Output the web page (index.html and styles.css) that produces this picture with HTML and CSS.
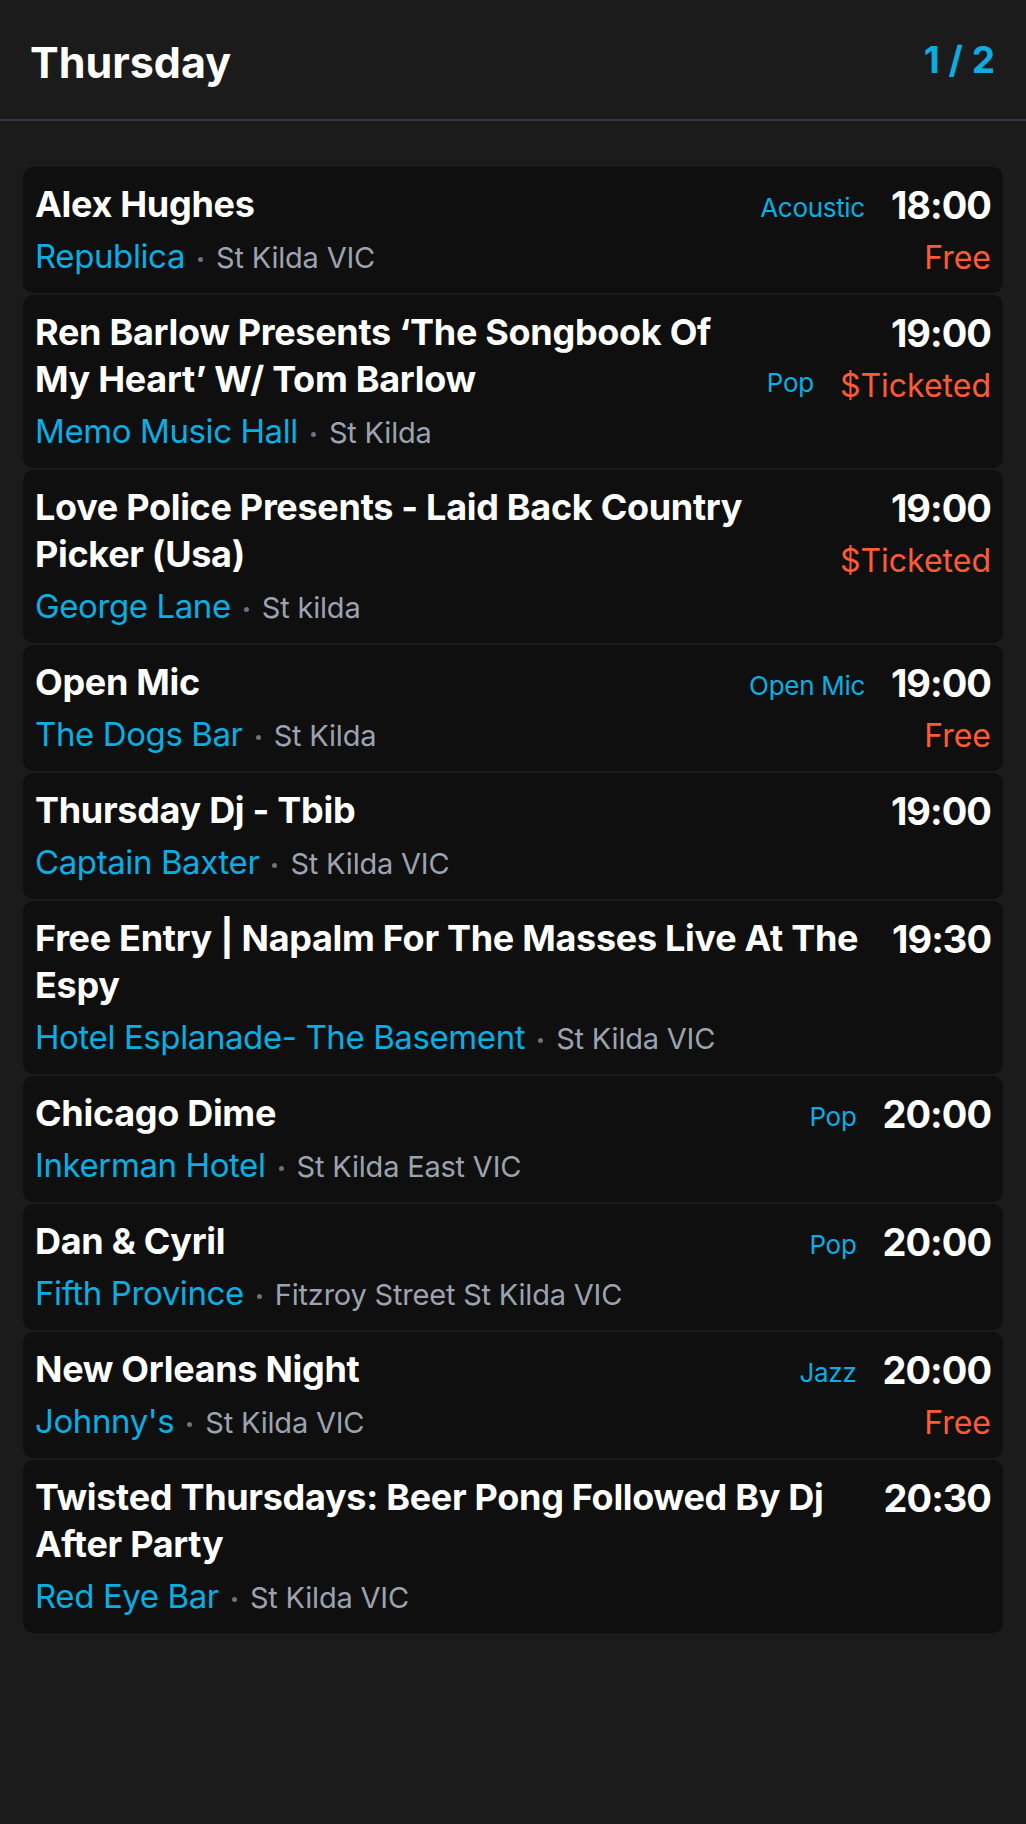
FILE: index.html
```html
<!DOCTYPE html>
<html lang="en">
<head>
<meta charset="utf-8">
<title>Thursday</title>
<link rel="stylesheet" href="styles.css">
</head>
<body>
<div class="screen">
  <header class="top">
    <h1 class="day">Thursday</h1>
    <div class="pager">1 / 2</div>
  </header>
  <main class="list">
    <article class="card">
      <div class="main">
        <div class="headline"><h2 class="title">Alex Hughes</h2><span class="genre">Acoustic</span></div>
        <div class="venue"><span class="vname">Republica</span><span class="dot"></span><span class="loc">St Kilda VIC</span></div>
      </div>
      <div class="side"><div class="time">18:00</div><div class="price">Free</div></div>
    </article>
    <article class="card">
      <div class="main">
        <div class="headline"><h2 class="title">Ren Barlow Presents ‘The Songbook Of My Heart’ W/ Tom Barlow</h2><span class="genre">Pop</span></div>
        <div class="venue"><span class="vname">Memo Music Hall</span><span class="dot"></span><span class="loc">St Kilda</span></div>
      </div>
      <div class="side"><div class="time">19:00</div><div class="price">$Ticketed</div></div>
    </article>
    <article class="card">
      <div class="main">
        <div class="headline"><h2 class="title">Love Police Presents - Laid Back Country Picker (Usa)</h2></div>
        <div class="venue"><span class="vname">George Lane</span><span class="dot"></span><span class="loc">St kilda</span></div>
      </div>
      <div class="side"><div class="time">19:00</div><div class="price">$Ticketed</div></div>
    </article>
    <article class="card">
      <div class="main">
        <div class="headline"><h2 class="title">Open Mic</h2><span class="genre">Open Mic</span></div>
        <div class="venue"><span class="vname">The Dogs Bar</span><span class="dot"></span><span class="loc">St Kilda</span></div>
      </div>
      <div class="side"><div class="time">19:00</div><div class="price">Free</div></div>
    </article>
    <article class="card">
      <div class="main">
        <div class="headline"><h2 class="title">Thursday Dj - Tbib</h2></div>
        <div class="venue"><span class="vname">Captain Baxter</span><span class="dot"></span><span class="loc">St Kilda VIC</span></div>
      </div>
      <div class="side"><div class="time">19:00</div></div>
    </article>
    <article class="card">
      <div class="main">
        <div class="headline"><h2 class="title">Free Entry | Napalm For The Masses Live At The Espy</h2></div>
        <div class="venue"><span class="vname">Hotel Esplanade- The Basement</span><span class="dot"></span><span class="loc">St Kilda VIC</span></div>
      </div>
      <div class="side"><div class="time">19:30</div></div>
    </article>
    <article class="card">
      <div class="main">
        <div class="headline"><h2 class="title">Chicago Dime</h2><span class="genre">Pop</span></div>
        <div class="venue"><span class="vname">Inkerman Hotel</span><span class="dot"></span><span class="loc">St Kilda East VIC</span></div>
      </div>
      <div class="side"><div class="time">20:00</div></div>
    </article>
    <article class="card">
      <div class="main">
        <div class="headline"><h2 class="title">Dan &amp; Cyril</h2><span class="genre">Pop</span></div>
        <div class="venue"><span class="vname">Fifth Province</span><span class="dot"></span><span class="loc">Fitzroy Street St Kilda VIC</span></div>
      </div>
      <div class="side"><div class="time">20:00</div></div>
    </article>
    <article class="card">
      <div class="main">
        <div class="headline"><h2 class="title">New Orleans Night</h2><span class="genre">Jazz</span></div>
        <div class="venue"><span class="vname">Johnny's</span><span class="dot"></span><span class="loc">St Kilda VIC</span></div>
      </div>
      <div class="side"><div class="time">20:00</div><div class="price">Free</div></div>
    </article>
    <article class="card">
      <div class="main">
        <div class="headline"><h2 class="title">Twisted Thursdays: Beer Pong Followed By Dj After Party</h2></div>
        <div class="venue"><span class="vname">Red Eye Bar</span><span class="dot"></span><span class="loc">St Kilda VIC</span></div>
      </div>
      <div class="side"><div class="time">20:30</div></div>
    </article>
  </main>
</div>
</body>
</html>
```

FILE: styles.css
```css
* { box-sizing: border-box; }

html, body {
  margin: 0;
  padding: 0;
  background: #1b1b1b;
}

body {
  font-family: Inter, "Noto Sans", "Liberation Sans", sans-serif;
  color: #ffffff;
}

.screen {
  min-height: 100vh;
  background: #1b1b1b;
}

.top {
  display: flex;
  justify-content: space-between;
  align-items: flex-start;
  height: 121px;
  padding: 36px 31px 0 30px;
  border-bottom: 2px solid #313845;
}

.day {
  margin: 0;
  font-size: 43px;
  line-height: 52px;
  font-weight: 700;
  letter-spacing: 0;
  color: #ffffff;
}

.pager {
  margin-top: -2px;
  font-size: 37px;
  line-height: 52px;
  font-weight: 700;
  color: #0aaee2;
}

.list {
  display: flex;
  flex-direction: column;
  gap: 2px;
  padding: 46px 23px 40px;
}

.card {
  display: flex;
  align-items: flex-start;
  gap: 26px;
  background: #0f0f0f;
  border-radius: 10px;
  padding: 14px 12px 17px 12px;
}

.main {
  flex: 1;
  min-width: 0;
}

.headline {
  display: flex;
  align-items: last baseline;
  gap: 20px;
}

.title {
  flex: 1;
  min-width: 0;
  margin: 0;
  font-size: 36px;
  line-height: 47px;
  font-weight: 700;
  letter-spacing: -0.3px;
  color: #ffffff;
}

.genre {
  flex: none;
  font-size: 26px;
  line-height: 34px;
  letter-spacing: -0.3px;
  color: #0aaee2;
}

.venue {
  margin-top: 8px;
  height: 40px;
  font-size: 33px;
  line-height: 40px;
  white-space: nowrap;
}

.vname {
  color: #0aaee2;
  letter-spacing: -0.4px;
}

.dot {
  display: inline-block;
  width: 5px;
  height: 5px;
  margin: 0 13px;
  border-radius: 50%;
  background: #6b7280;
  vertical-align: middle;
}

.loc {
  font-size: 29px;
  color: #9ca3af;
  letter-spacing: -0.2px;
}

.side {
  flex: none;
  text-align: right;
}

.time {
  font-size: 38px;
  line-height: 46px;
  font-weight: 700;
  letter-spacing: -1px;
  color: #ffffff;
  margin-top: 1px;
}

.price {
  margin-top: 10px;
  margin-bottom: -4px;
  font-size: 32px;
  line-height: 40px;
  color: #ff5a36;
  white-space: nowrap;
}
```
